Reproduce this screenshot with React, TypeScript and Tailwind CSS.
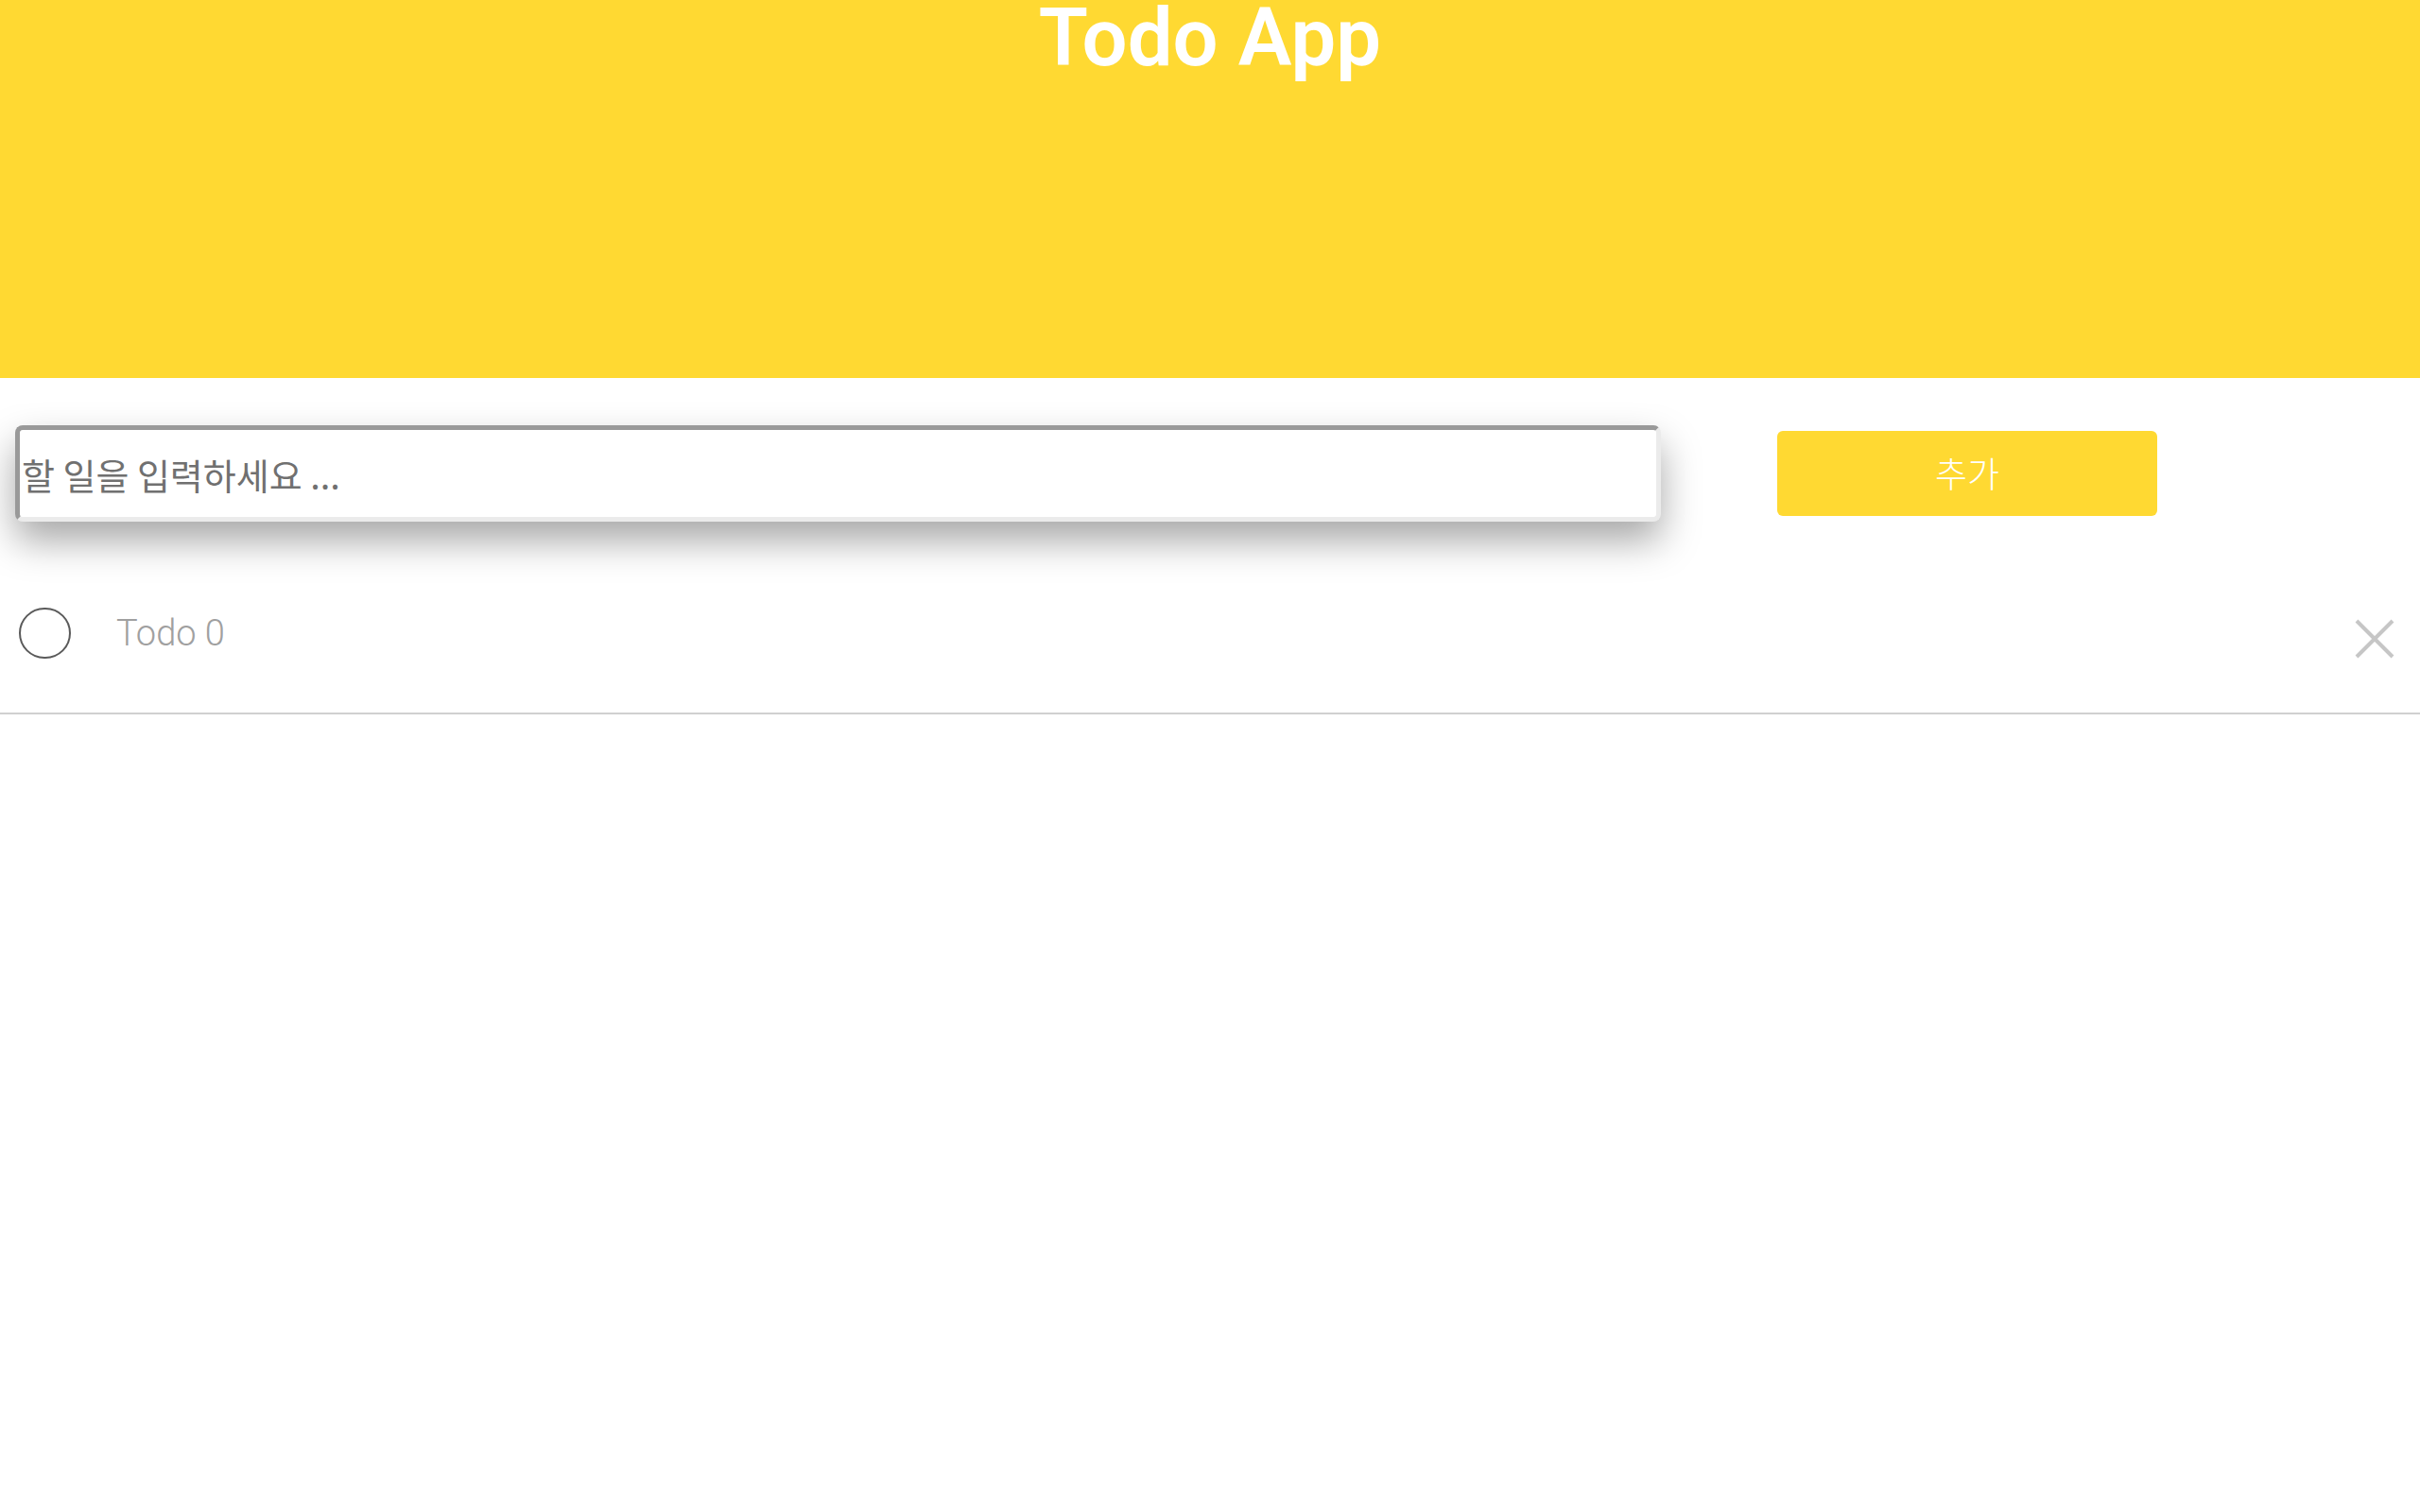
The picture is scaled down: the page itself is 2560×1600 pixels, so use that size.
import { useState } from 'react';

interface Todo {
  id: number;
  text: string;
  done: boolean;
}

export default function App() {
  const [value, setValue] = useState('');
  const [todos, setTodos] = useState<Todo[]>([{ id: 0, text: 'Todo 0', done: false }]);

  const addTodo = () => {
    if (!value.trim()) return;
    setTodos([...todos, { id: Date.now(), text: value, done: false }]);
    setValue('');
  };

  return (
    <div className="min-h-screen bg-white font-['Roboto','Liberation_Sans',sans-serif]">
      {/* Header */}
      <header className="h-[400px] bg-[#ffd932]">
        <h1 className="text-center text-[85px] leading-[80px] font-semibold text-white">Todo App</h1>
      </header>

      {/* Input */}
      <div className="mt-[50px] flex items-center">
        <input
          type="text"
          value={value}
          onChange={(e) => setValue(e.target.value)}
          onKeyDown={(e) => e.key === 'Enter' && addTodo()}
          placeholder="할 일을 입력하세요 ..."
          className="ml-4 h-[102px] w-[1741px] rounded-lg border-[5px] border-t-[#999999] border-l-[#999999] border-r-[#ebebeb] border-b-[#ebebeb] bg-white px-[2px] text-[38px] text-[#333] shadow-[0_20px_40px_rgba(0,0,0,0.35)] outline-none placeholder:text-[#707070] font-['Noto_Sans_CJK_KR',sans-serif]"
        />
        <button
          onClick={addTodo}
          className="ml-[123px] h-[90px] w-[402px] rounded-md bg-[#ffd932] text-[37px] font-light text-white font-['Noto_Sans_CJK_KR',sans-serif]"
        >
          추가
        </button>
      </div>

      {/* List */}
      <ul className="mt-[34px]">
        {todos.map((todo) => (
          <li key={todo.id} className="flex h-[170px] items-center border-b-2 border-[#d0d0d0] pl-5 pr-[27px]">
            <button
              onClick={() =>
                setTodos(todos.map((t) => (t.id === todo.id ? { ...t, done: !t.done } : t)))
              }
              className="h-[54px] w-[55px] shrink-0 rounded-full border-2 border-[#5a5a5a]"
            />
            <span className={`ml-12 flex-1 text-[38px] font-light text-[#a0a0a0] ${todo.done ? 'line-through' : ''}`}>
              {todo.text}
            </span>
            <button
              onClick={() => setTodos(todos.filter((t) => t.id !== todo.id))}
              className="mt-3"
            >
              <svg width="42" height="42" viewBox="0 0 42 42">
                <path d="M2 2L40 40M40 2L2 40" stroke="#c6c6c6" strokeWidth="4" />
              </svg>
            </button>
          </li>
        ))}
      </ul>
    </div>
  );
}
